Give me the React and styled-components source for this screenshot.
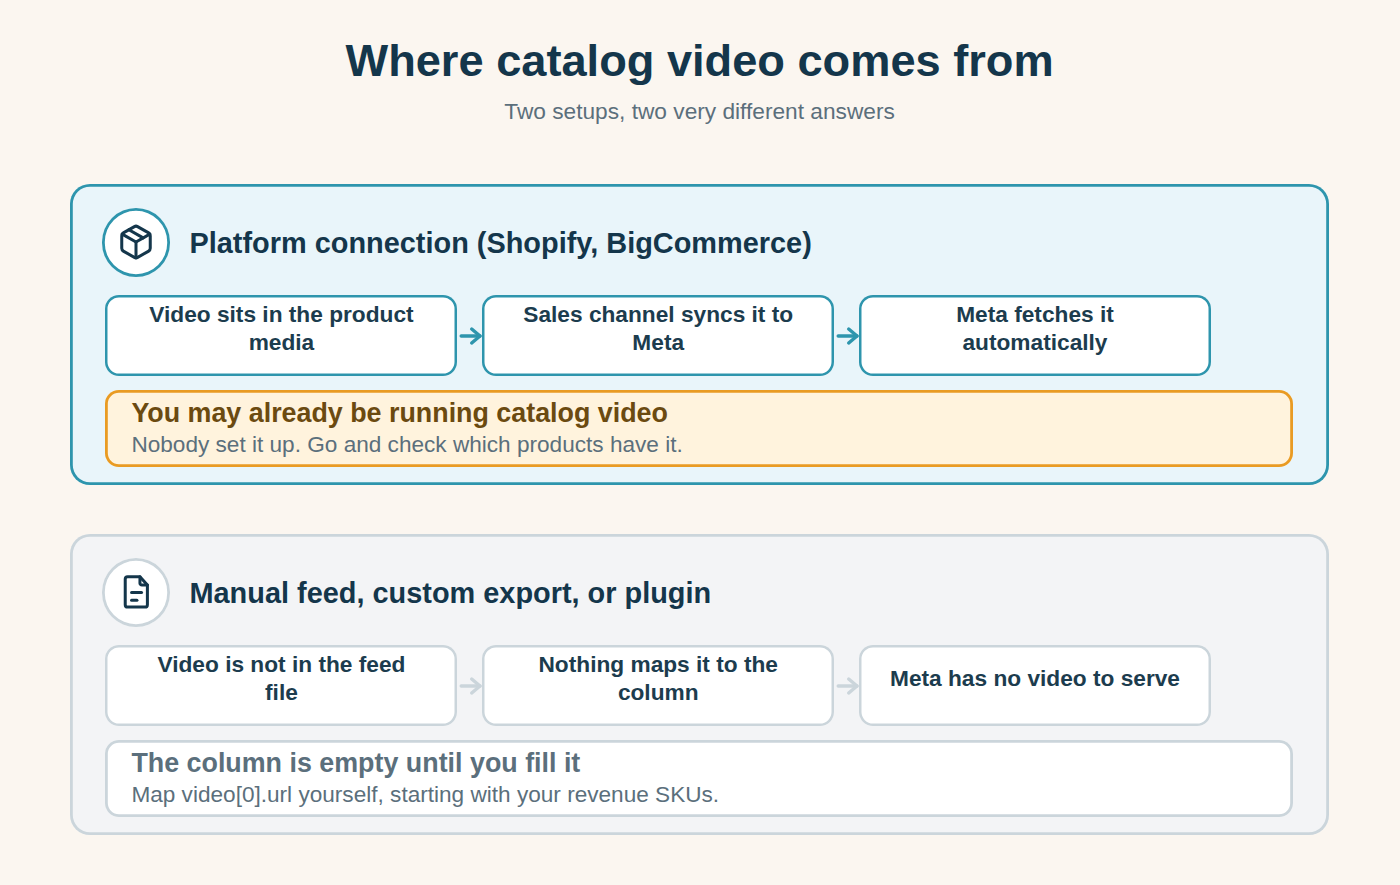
import React from 'react';
import styled, {createGlobalStyle} from 'styled-components';
import {Package} from 'lucide-react';

const GlobalStyle = createGlobalStyle`
  html, body {
    margin: 0;
    background: #fbf6f0;
    font-family: "Liberation Sans", Arial, sans-serif;
  }
`;

const themes = {
  teal: {line: '#2e95ad', fill: '#e9f5fa'},
  grey: {line: '#cbd5db', fill: '#f3f4f6'},
};

const setups = [
  {
    tone: 'teal',
    icon: 'box',
    title: 'Platform connection (Shopify, BigCommerce)',
    steps: ['Video sits in the product\nmedia', 'Sales channel syncs it to\nMeta', 'Meta fetches it\nautomatically'],
    noteTitle: 'You may already be running catalog video',
    noteText: 'Nobody set it up. Go and check which products have it.',
  },
  {
    tone: 'grey',
    icon: 'file',
    title: 'Manual feed, custom export, or plugin',
    steps: ['Video is not in the feed\nfile', 'Nothing maps it to the\ncolumn', 'Meta has no video to serve'],
    noteTitle: 'The column is empty until you fill it',
    noteText: 'Map video[0].url yourself, starting with your revenue SKUs.',
  },
];

const FileIcon = () => (
  <svg width="38" height="38" viewBox="0 0 24 24" fill="none" stroke="#14364b" strokeWidth="1.9" strokeLinecap="round" strokeLinejoin="round">
    <path d="M6.700 2.300h7.800l4.700 5.300v12.400a1.500 1.500 0 0 1-1.500 1.500H6.700a1.500 1.500 0 0 1-1.500-1.500V3.800a1.500 1.500 0 0 1 1.500-1.500z" />
    <path d="M14.500 2.300v4.100a1.200 1.200 0 0 0 1.200 1.200h3.500" />
    <path d="M9.200 12.300h6.300" />
    <path d="M9.200 17.200h3.400" />
  </svg>
);

const Arrow = ({color}) => (
  <ArrowSvg width="26" height="20" viewBox="0 0 26 20" fill="none" stroke={color} strokeWidth="3.400" strokeLinecap="round" strokeLinejoin="round">
    <path d="M4.200 10H23" />
    <path d="M14.700 3l8.300 7-8.300 7" />
  </ArrowSvg>
);

const SetupCard = ({setup}) => {
  const {line} = themes[setup.tone];
  return (
    <Card $tone={setup.tone}>
      <CardHeader>
        <IconCircle $tone={setup.tone}>
          {setup.icon === 'box' ? <Package size={38} color="#14364b" strokeWidth={1.9} /> : <FileIcon />}
        </IconCircle>
        <CardTitle>{setup.title}</CardTitle>
      </CardHeader>
      <Flow>
        {setup.steps.map((step, i) => (
          <React.Fragment key={step}>
            {i > 0 && <ArrowCell><Arrow color={line} /></ArrowCell>}
            <Step $tone={setup.tone}>{step}</Step>
          </React.Fragment>
        ))}
      </Flow>
      <Note $tone={setup.tone}>
        <NoteTitle $tone={setup.tone}>{setup.noteTitle}</NoteTitle>
        <NoteText>{setup.noteText}</NoteText>
      </Note>
    </Card>
  );
};

const App = () => (
  <Page>
    <GlobalStyle />
    <Title>Where catalog video comes from</Title>
    <Subtitle>Two setups, two very different answers</Subtitle>
    <Cards>
      {setups.map(setup => <SetupCard key={setup.title} setup={setup} />)}
    </Cards>
  </Page>
);

const Page = styled.div`
  height: 885px;
  box-sizing: border-box;
  padding: 34.500px 71.200px 0 70.300px;
  overflow: hidden;
`;
const Title = styled.h1`
  margin: 0;
  font-size: 45.200px;
  line-height: 52px;
  font-weight: 700;
  text-align: center;
  color: #14364b;
`;
const Subtitle = styled.p`
  margin: 11.500px 0 0;
  font-size: 22.700px;
  line-height: 27px;
  text-align: center;
  color: #5b6f7c;
`;
const Cards = styled.div`
  margin-top: 59.300px;
  display: flex;
  flex-direction: column;
  gap: 49.300px;
`;
const Card = styled.section`
  height: 300.700px;
  box-sizing: border-box;
  padding: 24px 35.400px 0 35.100px;
  border-radius: 20px;
  background: ${p => themes[p.$tone].fill};
  box-shadow: inset 0 0 0 2.800px ${p => themes[p.$tone].line};
`;
const CardHeader = styled.div`
  display: flex;
  align-items: center;
  gap: 19.500px;
  margin-left: -3.800px;
`;
const IconCircle = styled.div`
  width: 68.400px;
  height: 68.400px;
  flex: none;
  display: flex;
  align-items: center;
  justify-content: center;
  border-radius: 50%;
  background: #fff;
  box-shadow: inset 0 0 0 2.800px ${p => themes[p.$tone].line};
`;
const CardTitle = styled.h2`
  margin: 2px 0 0;
  font-size: 28.900px;
  line-height: 34px;
  font-weight: 700;
  color: #14364b;
`;
const Flow = styled.div`
  margin-top: 18.600px;
  display: flex;
`;
const Step = styled.div`
  width: 352.100px;
  height: 80.500px;
  flex: none;
  box-sizing: border-box;
  padding: 0 10px 13.500px;
  display: flex;
  align-items: center;
  justify-content: center;
  text-align: center;
  white-space: pre-line;
  border-radius: 14px;
  background: #fff;
  box-shadow: inset 0 0 0 2.500px ${p => themes[p.$tone].line};
  font-size: 22.700px;
  line-height: 27.500px;
  font-weight: 700;
  color: #1c3c4e;
`;
const ArrowCell = styled.div`
  width: 24.700px;
  flex: none;
  display: flex;
  align-items: center;
`;
const ArrowSvg = styled.svg`
  flex: none;
`;
const Note = styled.div`
  margin-top: 14.200px;
  height: 76.700px;
  box-sizing: border-box;
  padding: 8px 26px 0;
  border-radius: 14px;
  background: ${p => (p.$tone === 'teal' ? '#fff3dd' : '#fff')};
  box-shadow: inset 0 0 0 2.800px ${p => (p.$tone === 'teal' ? '#e99b23' : '#cbd5db')};
`;
const NoteTitle = styled.div`
  font-size: 26.850px;
  line-height: 31px;
  font-weight: 700;
  color: ${p => (p.$tone === 'teal' ? '#6b4a10' : '#5b6f7c')};
`;
const NoteText = styled.div`
  font-size: 22.600px;
  line-height: 27px;
  margin-top: 2px;
  color: #5b6f7c;
`;

export default App;
